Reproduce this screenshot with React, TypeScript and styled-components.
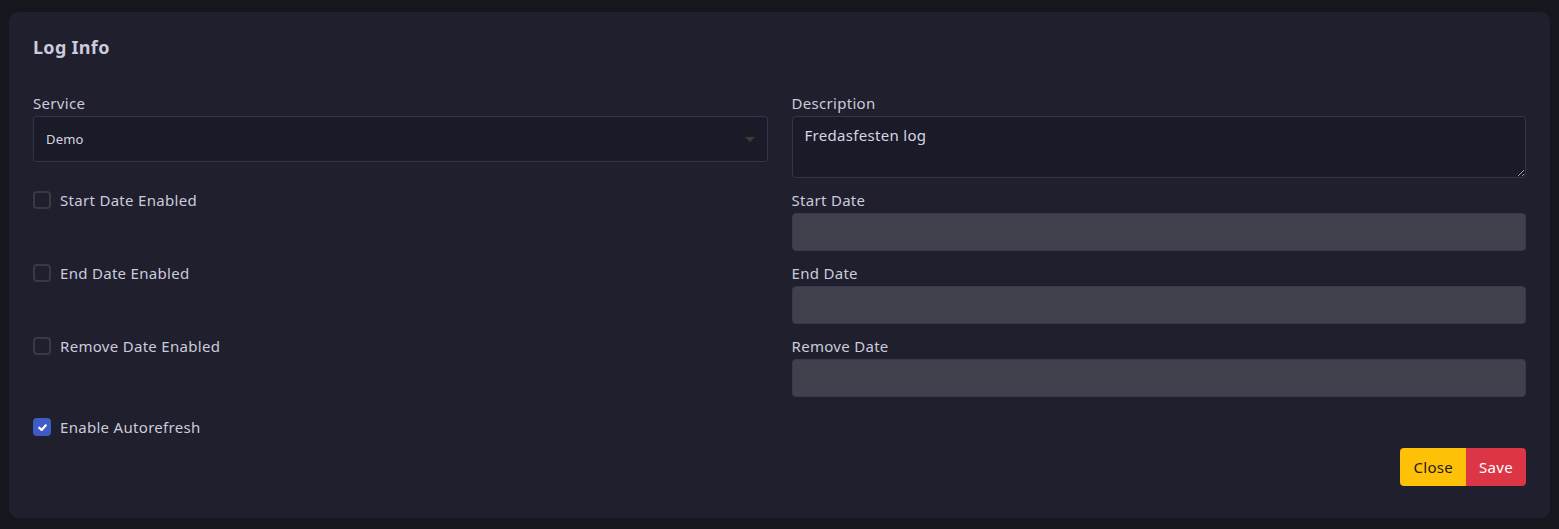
import React from 'react';
import styled, { createGlobalStyle } from 'styled-components';

const GlobalStyle = createGlobalStyle`
  html, body {
    margin: 0;
    padding: 0;
    background: #16161f;
    font-family: 'Noto Sans', 'Open Sans', sans-serif;
  }
`;

const Page = styled.div`
  padding: 12px 9px;
  min-height: 505px;
  box-sizing: border-box;
`;

const Card = styled.div`
  background: #1f1f2d;
  border-radius: 9px;
  padding: 23px 24px 32px;
`;

const Title = styled.h2`
  margin: 0 0 34px;
  font-size: 18px;
  line-height: 24px;
  font-weight: 700;
  letter-spacing: 0.3px;
  color: #cbcbdc;
`;

const Grid = styled.div`
  display: grid;
  grid-template-columns: 1fr 1fr;
  column-gap: 24px;
  row-gap: 12px;
`;

const Field = styled.div`
  display: flex;
  flex-direction: column;
`;

const Label = styled.label`
  font-size: 15px;
  line-height: 20px;
  letter-spacing: 0.3px;
  color: #cbcbdc;
  margin-bottom: 3px;
`;

const SelectBox = styled.div`
  position: relative;
  height: 46px;
  box-sizing: border-box;
  border: 1px solid #35334f;
  border-radius: 3px;
  background: #1b1a28;
  display: flex;
  align-items: center;
  padding: 0 12px;
  font-size: 13px;
  letter-spacing: 0.2px;
  color: #d6d6e2;
`;

const Caret = styled.span`
  position: absolute;
  right: 12px;
  top: 50%;
  margin-top: -2px;
  width: 0;
  height: 0;
  border-left: 5px solid transparent;
  border-right: 5px solid transparent;
  border-top: 5px solid #3c3c32;
`;

const TextArea = styled.textarea`
  height: 62px;
  box-sizing: border-box;
  border: 1px solid #35334f;
  border-radius: 4px;
  background: #1b1a28;
  color: #d6d6e2;
  font-family: inherit;
  font-size: 15px;
  line-height: 20px;
  letter-spacing: 0.3px;
  padding: 8px 12px;
  resize: vertical;
  outline: none;
`;

const DateInput = styled.input`
  height: 38px;
  box-sizing: border-box;
  border: 1px solid #3a3850;
  border-radius: 4px;
  background: #41404d;
  padding: 0 12px;
  outline: none;
`;

const CheckRow = styled.label<{ $offset?: number }>`
  display: flex;
  align-items: center;
  gap: 9px;
  height: 20px;
  margin-top: ${({ $offset }) => $offset ?? 0}px;
  font-size: 15px;
  letter-spacing: 0.3px;
  color: #cbcbdc;
  align-self: start;
`;

const Box = styled.span<{ $checked?: boolean }>`
  width: 18px;
  height: 18px;
  box-sizing: border-box;
  border-radius: 4px;
  border: 2px solid ${({ $checked }) => ($checked ? '#3f5cc4' : '#393943')};
  background: ${({ $checked }) => ($checked ? '#3f5cc4' : 'transparent')};
  display: flex;
  align-items: center;
  justify-content: center;
`;

const Footer = styled.div`
  display: flex;
  justify-content: flex-end;
  margin-top: 11px;
`;

const Button = styled.button<{ $variant: 'close' | 'save' }>`
  height: 38px;
  padding: 0 13px;
  border: none;
  font-family: inherit;
  font-size: 15px;
  letter-spacing: 0.3px;
  border-radius: ${({ $variant }) => ($variant === 'close' ? '4px 0 0 4px' : '0 4px 4px 0')};
  background: ${({ $variant }) => ($variant === 'close' ? '#ffc107' : '#dc3545')};
  color: ${({ $variant }) => ($variant === 'close' ? '#1a1a1a' : '#ffffff')};
  cursor: pointer;
`;

const Check = () => (
  <svg width="11" height="11" viewBox="0 0 10 10">
    <path d="M2 5.2 L4.2 7.2 L8 3" fill="none" stroke="#fff" strokeWidth="2" strokeLinecap="round" strokeLinejoin="round" />
  </svg>
);

const Checkbox: React.FC<{ label: string; checked?: boolean; offset?: number }> = ({ label, checked, offset }) => (
  <CheckRow $offset={offset}>
    <Box $checked={checked}>{checked && <Check />}</Box>
    {label}
  </CheckRow>
);

const dates = [
  ['Start Date Enabled', 'Start Date'],
  ['End Date Enabled', 'End Date'],
  ['Remove Date Enabled', 'Remove Date'],
];

const App: React.FC = () => (
  <>
    <GlobalStyle />
    <Page>
      <Card>
        <Title>Log Info</Title>
        <Grid>
          <Field>
            <Label>Service</Label>
            <SelectBox>
              Demo
              <Caret />
            </SelectBox>
          </Field>
          <Field>
            <Label>Description</Label>
            <TextArea defaultValue="Fredasfesten log" />
          </Field>
          {dates.map(([check, label]) => (
            <React.Fragment key={label}>
              <Checkbox label={check} />
              <Field>
                <Label>{label}</Label>
                <DateInput disabled />
              </Field>
            </React.Fragment>
          ))}
          <Checkbox label="Enable Autorefresh" checked offset={8} />
        </Grid>
        <Footer>
          <Button $variant="close">Close</Button>
          <Button $variant="save">Save</Button>
        </Footer>
      </Card>
    </Page>
  </>
);

export default App;
